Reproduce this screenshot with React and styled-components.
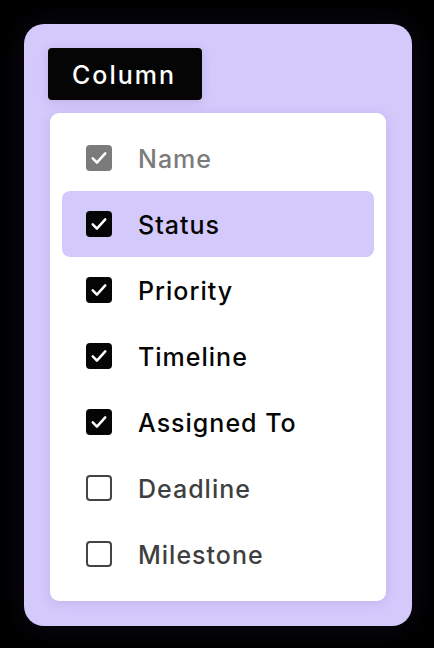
import React from 'react';
import styled, {createGlobalStyle} from 'styled-components';

const columns = [
    {label: 'Name', checked: true, locked: true},
    {label: 'Status', checked: true, active: true},
    {label: 'Priority', checked: true},
    {label: 'Timeline', checked: true},
    {label: 'Assigned To', checked: true},
    {label: 'Deadline', checked: false},
    {label: 'Milestone', checked: false},
];

const Check = () => (
    <svg width="20" height="20" viewBox="0 0 24 24" fill="none" stroke="#fff" strokeWidth="3" strokeLinecap="round" strokeLinejoin="round">
        <path d="M4.5 12.5l5 5L19.5 6.5" />
    </svg>
);

const App = () => (
    <>
        <GlobalStyle />
        <Card>
            <Tab>Column</Tab>
            <Panel>
                {columns.map(col => (
                    <Row key={col.label} $active={col.active}>
                        <Box $checked={col.checked} $locked={col.locked}>
                            {col.checked && <Check />}
                        </Box>
                        <Label $checked={col.checked} $locked={col.locked}>{col.label}</Label>
                    </Row>
                ))}
            </Panel>
        </Card>
    </>
);

const GlobalStyle = createGlobalStyle`
    html, body {
        margin : 0;
        background : #000;
    }
    body {
        font-family : Inter, "Noto Sans", sans-serif;
    }
`;
const Card = styled.div`
    display : flex;
    flex-direction: column;
    align-items : flex-start;
    width : 388px;
    height : 602px;
    box-sizing : border-box;
    margin : 24px;
    padding : 24px 26px 25px;
    background : #d4c9fb;
    border-radius : 20px;
    box-shadow : 0 0 30px rgba(40, 30, 70, 0.35);
`;
const Tab = styled.div`
    display : flex;
    align-items : center;
    height : 52px;
    width : 154px;
    box-sizing : border-box;
    margin-left : -2px;
    padding : 2px 0 0 24px;
    background : #050505;
    color : #fff;
    border-radius : 4px;
    font-size : 25px;
    font-weight : 500;
    letter-spacing : 2px;
    box-shadow : 0 2px 10px rgba(60, 40, 120, 0.15);
`;
const Panel = styled.div`
    display : flex;
    flex-direction: column;
    align-self : stretch;
    flex : 1;
    margin-top : 13px;
    padding : 12px 12px 0;
    background : #fff;
    border-radius : 9px;
    box-shadow : 0 2px 12px rgba(60, 40, 120, 0.12);
`;
const Row = styled.div`
    display : flex;
    align-items : center;
    gap : 26px;
    height : 66px;
    padding-left : 24px;
    border-radius : 8px;
    background : ${props => props.$active ? '#d4c9fb' : 'transparent'};
`;
const Box = styled.div`
    display : flex;
    align-items : center;
    justify-content : center;
    width : 26px;
    height : 26px;
    box-sizing : border-box;
    border-radius : 4px;
    background : ${props => props.$locked ? '#7b7b7b' : props.$checked ? '#050505' : '#fff'};
    border : ${props => props.$checked ? 'none' : '2px solid #444'};
`;
const Label = styled.span`
    padding-top : 2px;
    font-size : 25px;
    font-weight : 500;
    letter-spacing : 1px;
    color : ${props => props.$locked ? '#7b7b7b' : props.$checked ? '#050505' : '#3f3f3f'};
`;

export default App;
